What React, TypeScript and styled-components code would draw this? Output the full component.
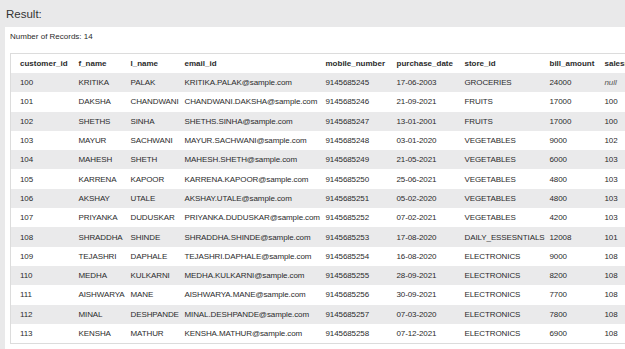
import styled, { createGlobalStyle } from 'styled-components';

const GlobalStyle = createGlobalStyle`
    html, body {
        margin: 0;
        padding: 0;
        overflow: hidden;
        background-color: #e9e9ea;
        font-family: "Liberation Sans", Arial, sans-serif;
        color: #2b2b2b;
    }
`;

const Page = styled.div`
    display: flex;
    flex-direction: column;
    width: 625px;
    height: 349px;
`;

const Title = styled.h1`
    margin: 0;
    height: 27px;
    padding: 0 6px;
    display: flex;
    align-items: center;
    font-size: 11.5px;
    font-weight: normal;
    color: #333;
`;

const Panel = styled.div`
    flex: 1;
    margin-left: 5px;
    padding: 5px 0 0 5px;
    background-color: #fff;
    overflow: hidden;
`;

const Count = styled.div`
    height: 10px;
    line-height: 10px;
    margin-bottom: 11px;
    font-size: 8px;
    color: #2b2b2b;
`;

const Table = styled.table`
    border-collapse: collapse;
    table-layout: fixed;
    width: 700px;
    border-top: 1px solid #dcdcdc;
    border-left: 1px solid #dcdcdc;
    border-bottom: 1px solid #dcdcdc;
    font-size: 8px;
`;

const HeadCell = styled.th`
    height: 19px;
    padding: 0 0 0 9px;
    text-align: left;
    font-weight: bold;
    color: #2b2b2b;
    white-space: nowrap;
`;

const Row = styled.tr<{ $striped: boolean }>`
    height: 19.3px;
    background-color: ${(p) => (p.$striped ? '#eaeaeb' : '#fff')};
`;

const Cell = styled.td<{ $null?: boolean }>`
    padding: 0 0 0 9px;
    white-space: nowrap;
    letter-spacing: -0.1px;
    color: ${(p) => (p.$null ? '#555' : '#2b2b2b')};
    font-style: ${(p) => (p.$null ? 'italic' : 'normal')};
`;

const columns = [
    { name: 'customer_id', width: 59 },
    { name: 'f_name', width: 52 },
    { name: 'l_name', width: 54 },
    { name: 'email_id', width: 141 },
    { name: 'mobile_number', width: 71 },
    { name: 'purchase_date', width: 68 },
    { name: 'store_id', width: 85 },
    { name: 'bill_amount', width: 55 },
    { name: 'salesman_id', width: 115 },
];

const rows: (string | null)[][] = [
    ['100', 'KRITIKA', 'PALAK', 'KRITIKA.PALAK@sample.com', '9145685245', '17-06-2003', 'GROCERIES', '24000', null],
    ['101', 'DAKSHA', 'CHANDWANI', 'CHANDWANI.DAKSHA@sample.com', '9145685246', '21-09-2021', 'FRUITS', '17000', '100'],
    ['102', 'SHETHS', 'SINHA', 'SHETHS.SINHA@sample.com', '9145685247', '13-01-2001', 'FRUITS', '17000', '100'],
    ['103', 'MAYUR', 'SACHWANI', 'MAYUR.SACHWANI@sample.com', '9145685248', '03-01-2020', 'VEGETABLES', '9000', '102'],
    ['104', 'MAHESH', 'SHETH', 'MAHESH.SHETH@sample.com', '9145685249', '21-05-2021', 'VEGETABLES', '6000', '103'],
    ['105', 'KARRENA', 'KAPOOR', 'KARRENA.KAPOOR@sample.com', '9145685250', '25-06-2021', 'VEGETABLES', '4800', '103'],
    ['106', 'AKSHAY', 'UTALE', 'AKSHAY.UTALE@sample.com', '9145685251', '05-02-2020', 'VEGETABLES', '4800', '103'],
    ['107', 'PRIYANKA', 'DUDUSKAR', 'PRIYANKA.DUDUSKAR@sample.com', '9145685252', '07-02-2021', 'VEGETABLES', '4200', '103'],
    ['108', 'SHRADDHA', 'SHINDE', 'SHRADDHA.SHINDE@sample.com', '9145685253', '17-08-2020', 'DAILY_ESSESNTIALS', '12008', '101'],
    ['109', 'TEJASHRI', 'DAPHALE', 'TEJASHRI.DAPHALE@sample.com', '9145685254', '16-08-2020', 'ELECTRONICS', '9000', '108'],
    ['110', 'MEDHA', 'KULKARNI', 'MEDHA.KULKARNI@sample.com', '9145685255', '28-09-2021', 'ELECTRONICS', '8200', '108'],
    ['111', 'AISHWARYA', 'MANE', 'AISHWARYA.MANE@sample.com', '9145685256', '30-09-2021', 'ELECTRONICS', '7700', '108'],
    ['112', 'MINAL', 'DESHPANDE', 'MINAL.DESHPANDE@sample.com', '9145685257', '07-03-2020', 'ELECTRONICS', '7800', '108'],
    ['113', 'KENSHA', 'MATHUR', 'KENSHA.MATHUR@sample.com', '9145685258', '07-12-2021', 'ELECTRONICS', '6900', '108'],
];

const App = () => {
    return (
        <Page>
            <GlobalStyle />
            <Title>Result:</Title>
            <Panel>
                <Count>Number of Records: {rows.length}</Count>
                <Table>
                    <colgroup>
                        {columns.map((c) => (
                            <col key={c.name} style={{ width: c.width }} />
                        ))}
                    </colgroup>
                    <thead>
                        <tr>
                            {columns.map((c) => (
                                <HeadCell key={c.name}>{c.name}</HeadCell>
                            ))}
                        </tr>
                    </thead>
                    <tbody>
                        {rows.map((r, i) => (
                            <Row key={r[0]} $striped={i % 2 === 0}>
                                {r.map((v, j) =>
                                    v === null ? (
                                        <Cell key={j} $null>null</Cell>
                                    ) : (
                                        <Cell key={j}>{v}</Cell>
                                    )
                                )}
                            </Row>
                        ))}
                    </tbody>
                </Table>
            </Panel>
        </Page>
    );
};

export default App;
